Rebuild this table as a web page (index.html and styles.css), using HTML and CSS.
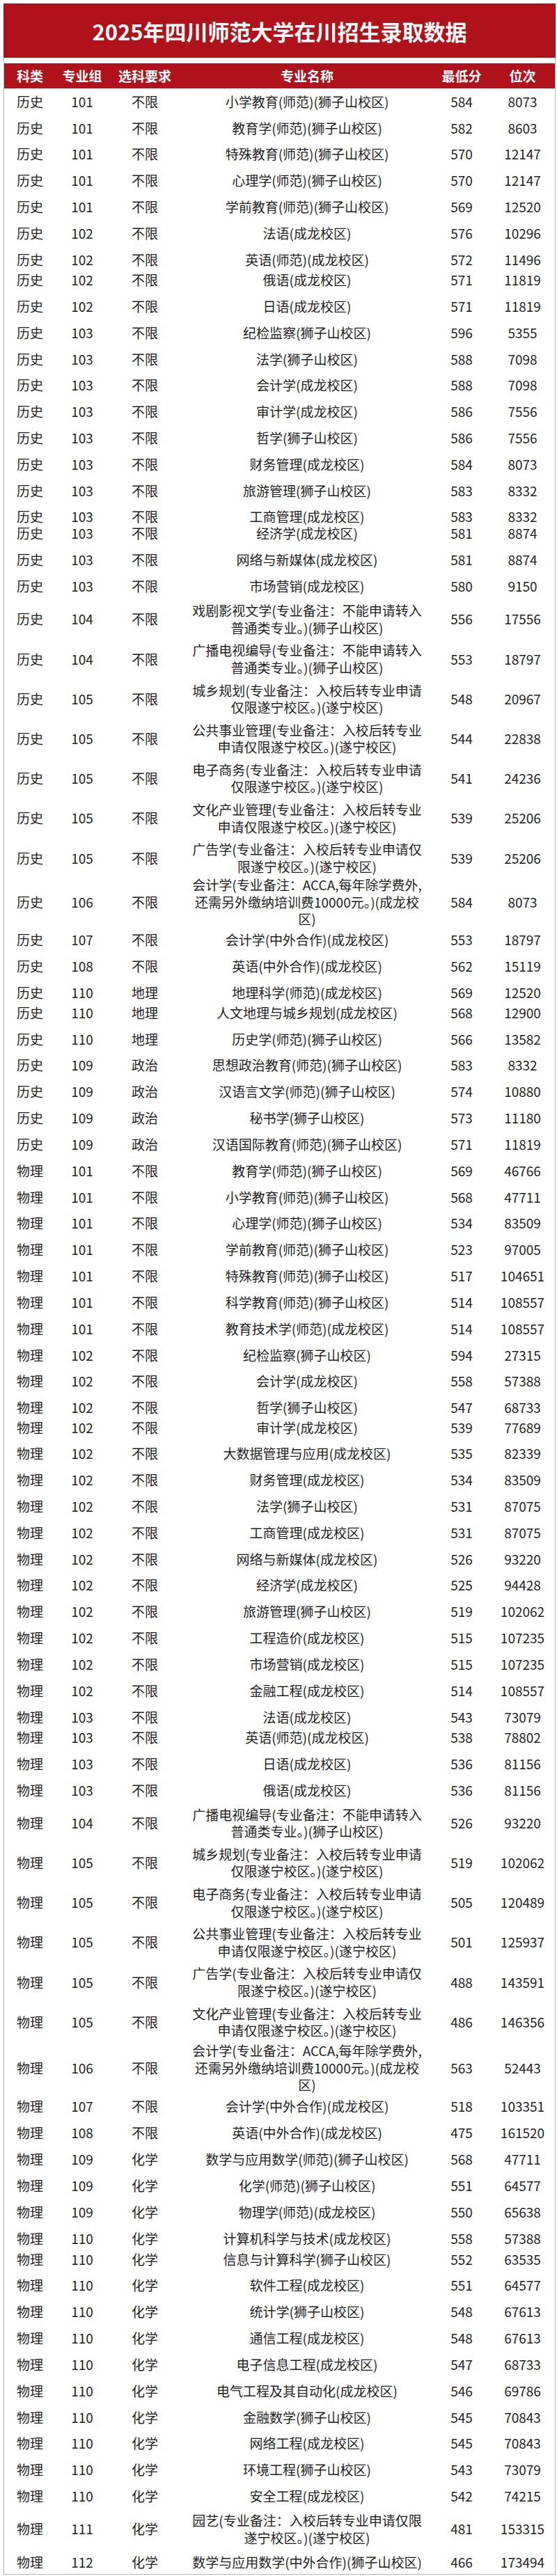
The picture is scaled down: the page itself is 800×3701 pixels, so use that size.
FILE: index.html
```html
<!DOCTYPE html>
<html lang="zh-CN">
<head>
<meta charset="utf-8">
<title>2025年四川师范大学在川招生录取数据</title>
<link rel="stylesheet" href="styles.css">
</head>
<body>
<div class="sheet">
  <div class="title">2025年四川师范大学在川招生录取数据</div>
  <div class="gap"></div>
  <div class="table">
    <div class="row head"><div>科类</div><div>专业组</div><div>选科要求</div><div>专业名称</div><div>最低分</div><div>位次</div></div>
    <div class="row"><div>历史</div><div>101</div><div>不限</div><div>小学教育(师范)(狮子山校区)</div><div>584</div><div>8073</div></div>
    <div class="row"><div>历史</div><div>101</div><div>不限</div><div>教育学(师范)(狮子山校区)</div><div>582</div><div>8603</div></div>
    <div class="row"><div>历史</div><div>101</div><div>不限</div><div>特殊教育(师范)(狮子山校区)</div><div>570</div><div>12147</div></div>
    <div class="row"><div>历史</div><div>101</div><div>不限</div><div>心理学(师范)(狮子山校区)</div><div>570</div><div>12147</div></div>
    <div class="row"><div>历史</div><div>101</div><div>不限</div><div>学前教育(师范)(狮子山校区)</div><div>569</div><div>12520</div></div>
    <div class="row"><div>历史</div><div>102</div><div>不限</div><div>法语(成龙校区)</div><div>576</div><div>10296</div></div>
    <div class="row r29"><div>历史</div><div>102</div><div>不限</div><div>英语(师范)(成龙校区)</div><div>572</div><div>11496</div></div>
    <div class="row"><div>历史</div><div>102</div><div>不限</div><div>俄语(成龙校区)</div><div>571</div><div>11819</div></div>
    <div class="row"><div>历史</div><div>102</div><div>不限</div><div>日语(成龙校区)</div><div>571</div><div>11819</div></div>
    <div class="row"><div>历史</div><div>103</div><div>不限</div><div>纪检监察(狮子山校区)</div><div>596</div><div>5355</div></div>
    <div class="row"><div>历史</div><div>103</div><div>不限</div><div>法学(狮子山校区)</div><div>588</div><div>7098</div></div>
    <div class="row"><div>历史</div><div>103</div><div>不限</div><div>会计学(成龙校区)</div><div>588</div><div>7098</div></div>
    <div class="row"><div>历史</div><div>103</div><div>不限</div><div>审计学(成龙校区)</div><div>586</div><div>7556</div></div>
    <div class="row"><div>历史</div><div>103</div><div>不限</div><div>哲学(狮子山校区)</div><div>586</div><div>7556</div></div>
    <div class="row"><div>历史</div><div>103</div><div>不限</div><div>财务管理(成龙校区)</div><div>584</div><div>8073</div></div>
    <div class="row"><div>历史</div><div>103</div><div>不限</div><div>旅游管理(狮子山校区)</div><div>583</div><div>8332</div></div>
    <div class="row r24"><div>历史</div><div>103</div><div>不限</div><div>工商管理(成龙校区)</div><div>583</div><div>8332</div></div>
    <div class="row"><div>历史</div><div>103</div><div>不限</div><div>经济学(成龙校区)</div><div>581</div><div>8874</div></div>
    <div class="row"><div>历史</div><div>103</div><div>不限</div><div>网络与新媒体(成龙校区)</div><div>581</div><div>8874</div></div>
    <div class="row r47"><div>历史</div><div>103</div><div>不限</div><div>市场营销(成龙校区)</div><div>580</div><div>9150</div></div>
    <div class="row r57"><div>历史</div><div>104</div><div>不限</div><div>戏剧影视文学(专业备注：不能申请转入<br>普通类专业。)(狮子山校区)</div><div>556</div><div>17556</div></div>
    <div class="row r57"><div>历史</div><div>104</div><div>不限</div><div>广播电视编导(专业备注：不能申请转入<br>普通类专业。)(狮子山校区)</div><div>553</div><div>18797</div></div>
    <div class="row r57"><div>历史</div><div>105</div><div>不限</div><div>城乡规划(专业备注：入校后转专业申请<br>仅限遂宁校区。)(遂宁校区)</div><div>548</div><div>20967</div></div>
    <div class="row r57"><div>历史</div><div>105</div><div>不限</div><div>公共事业管理(专业备注：入校后转专业<br>申请仅限遂宁校区。)(遂宁校区)</div><div>544</div><div>22838</div></div>
    <div class="row r57"><div>历史</div><div>105</div><div>不限</div><div>电子商务(专业备注：入校后转专业申请<br>仅限遂宁校区。)(遂宁校区)</div><div>541</div><div>24236</div></div>
    <div class="row r57"><div>历史</div><div>105</div><div>不限</div><div>文化产业管理(专业备注：入校后转专业<br>申请仅限遂宁校区。)(遂宁校区)</div><div>539</div><div>25206</div></div>
    <div class="row r63"><div>历史</div><div>105</div><div>不限</div><div>广告学(专业备注：入校后转专业申请仅<br>限遂宁校区。)(遂宁校区)</div><div>539</div><div>25206</div></div>
    <div class="row r54"><div>历史</div><div>106</div><div>不限</div><div>会计学(专业备注：ACCA,每年除学费外,<br>还需另外缴纳培训费10000元。)(成龙校<br>区)</div><div>584</div><div>8073</div></div>
    <div class="row"><div>历史</div><div>107</div><div>不限</div><div>会计学(中外合作)(成龙校区)</div><div>553</div><div>18797</div></div>
    <div class="row"><div>历史</div><div>108</div><div>不限</div><div>英语(中外合作)(成龙校区)</div><div>562</div><div>15119</div></div>
    <div class="row r29"><div>历史</div><div>110</div><div>地理</div><div>地理科学(师范)(成龙校区)</div><div>569</div><div>12520</div></div>
    <div class="row"><div>历史</div><div>110</div><div>地理</div><div>人文地理与城乡规划(成龙校区)</div><div>568</div><div>12900</div></div>
    <div class="row"><div>历史</div><div>110</div><div>地理</div><div>历史学(师范)(狮子山校区)</div><div>566</div><div>13582</div></div>
    <div class="row"><div>历史</div><div>109</div><div>政治</div><div>思想政治教育(师范)(狮子山校区)</div><div>583</div><div>8332</div></div>
    <div class="row"><div>历史</div><div>109</div><div>政治</div><div>汉语言文学(师范)(狮子山校区)</div><div>574</div><div>10880</div></div>
    <div class="row"><div>历史</div><div>109</div><div>政治</div><div>秘书学(狮子山校区)</div><div>573</div><div>11180</div></div>
    <div class="row"><div>历史</div><div>109</div><div>政治</div><div>汉语国际教育(师范)(狮子山校区)</div><div>571</div><div>11819</div></div>
    <div class="row"><div>物理</div><div>101</div><div>不限</div><div>教育学(师范)(狮子山校区)</div><div>569</div><div>46766</div></div>
    <div class="row"><div>物理</div><div>101</div><div>不限</div><div>小学教育(师范)(狮子山校区)</div><div>568</div><div>47711</div></div>
    <div class="row"><div>物理</div><div>101</div><div>不限</div><div>心理学(师范)(狮子山校区)</div><div>534</div><div>83509</div></div>
    <div class="row"><div>物理</div><div>101</div><div>不限</div><div>学前教育(师范)(狮子山校区)</div><div>523</div><div>97005</div></div>
    <div class="row"><div>物理</div><div>101</div><div>不限</div><div>特殊教育(师范)(狮子山校区)</div><div>517</div><div>104651</div></div>
    <div class="row"><div>物理</div><div>101</div><div>不限</div><div>科学教育(师范)(狮子山校区)</div><div>514</div><div>108557</div></div>
    <div class="row"><div>物理</div><div>101</div><div>不限</div><div>教育技术学(师范)(成龙校区)</div><div>514</div><div>108557</div></div>
    <div class="row"><div>物理</div><div>102</div><div>不限</div><div>纪检监察(狮子山校区)</div><div>594</div><div>27315</div></div>
    <div class="row"><div>物理</div><div>102</div><div>不限</div><div>会计学(成龙校区)</div><div>558</div><div>57388</div></div>
    <div class="row r28"><div>物理</div><div>102</div><div>不限</div><div>哲学(狮子山校区)</div><div>547</div><div>68733</div></div>
    <div class="row"><div>物理</div><div>102</div><div>不限</div><div>审计学(成龙校区)</div><div>539</div><div>77689</div></div>
    <div class="row"><div>物理</div><div>102</div><div>不限</div><div>大数据管理与应用(成龙校区)</div><div>535</div><div>82339</div></div>
    <div class="row"><div>物理</div><div>102</div><div>不限</div><div>财务管理(成龙校区)</div><div>534</div><div>83509</div></div>
    <div class="row"><div>物理</div><div>102</div><div>不限</div><div>法学(狮子山校区)</div><div>531</div><div>87075</div></div>
    <div class="row"><div>物理</div><div>102</div><div>不限</div><div>工商管理(成龙校区)</div><div>531</div><div>87075</div></div>
    <div class="row"><div>物理</div><div>102</div><div>不限</div><div>网络与新媒体(成龙校区)</div><div>526</div><div>93220</div></div>
    <div class="row"><div>物理</div><div>102</div><div>不限</div><div>经济学(成龙校区)</div><div>525</div><div>94428</div></div>
    <div class="row"><div>物理</div><div>102</div><div>不限</div><div>旅游管理(狮子山校区)</div><div>519</div><div>102062</div></div>
    <div class="row"><div>物理</div><div>102</div><div>不限</div><div>工程造价(成龙校区)</div><div>515</div><div>107235</div></div>
    <div class="row"><div>物理</div><div>102</div><div>不限</div><div>市场营销(成龙校区)</div><div>515</div><div>107235</div></div>
    <div class="row"><div>物理</div><div>102</div><div>不限</div><div>金融工程(成龙校区)</div><div>514</div><div>108557</div></div>
    <div class="row r29"><div>物理</div><div>103</div><div>不限</div><div>法语(成龙校区)</div><div>543</div><div>73079</div></div>
    <div class="row"><div>物理</div><div>103</div><div>不限</div><div>英语(师范)(成龙校区)</div><div>538</div><div>78802</div></div>
    <div class="row"><div>物理</div><div>103</div><div>不限</div><div>日语(成龙校区)</div><div>536</div><div>81156</div></div>
    <div class="row r47"><div>物理</div><div>103</div><div>不限</div><div>俄语(成龙校区)</div><div>536</div><div>81156</div></div>
    <div class="row r57"><div>物理</div><div>104</div><div>不限</div><div>广播电视编导(专业备注：不能申请转入<br>普通类专业。)(狮子山校区)</div><div>526</div><div>93220</div></div>
    <div class="row r57"><div>物理</div><div>105</div><div>不限</div><div>城乡规划(专业备注：入校后转专业申请<br>仅限遂宁校区。)(遂宁校区)</div><div>519</div><div>102062</div></div>
    <div class="row r57"><div>物理</div><div>105</div><div>不限</div><div>电子商务(专业备注：入校后转专业申请<br>仅限遂宁校区。)(遂宁校区)</div><div>505</div><div>120489</div></div>
    <div class="row r57"><div>物理</div><div>105</div><div>不限</div><div>公共事业管理(专业备注：入校后转专业<br>申请仅限遂宁校区。)(遂宁校区)</div><div>501</div><div>125937</div></div>
    <div class="row r57"><div>物理</div><div>105</div><div>不限</div><div>广告学(专业备注：入校后转专业申请仅<br>限遂宁校区。)(遂宁校区)</div><div>488</div><div>143591</div></div>
    <div class="row r66"><div>物理</div><div>105</div><div>不限</div><div>文化产业管理(专业备注：入校后转专业<br>申请仅限遂宁校区。)(遂宁校区)</div><div>486</div><div>146356</div></div>
    <div class="row r55"><div>物理</div><div>106</div><div>不限</div><div>会计学(专业备注：ACCA,每年除学费外,<br>还需另外缴纳培训费10000元。)(成龙校<br>区)</div><div>563</div><div>52443</div></div>
    <div class="row"><div>物理</div><div>107</div><div>不限</div><div>会计学(中外合作)(成龙校区)</div><div>518</div><div>103351</div></div>
    <div class="row"><div>物理</div><div>108</div><div>不限</div><div>英语(中外合作)(成龙校区)</div><div>475</div><div>161520</div></div>
    <div class="row"><div>物理</div><div>109</div><div>化学</div><div>数学与应用数学(师范)(狮子山校区)</div><div>568</div><div>47711</div></div>
    <div class="row"><div>物理</div><div>109</div><div>化学</div><div>化学(师范)(狮子山校区)</div><div>551</div><div>64577</div></div>
    <div class="row"><div>物理</div><div>109</div><div>化学</div><div>物理学(师范)(成龙校区)</div><div>550</div><div>65638</div></div>
    <div class="row r30"><div>物理</div><div>110</div><div>化学</div><div>计算机科学与技术(成龙校区)</div><div>558</div><div>57388</div></div>
    <div class="row"><div>物理</div><div>110</div><div>化学</div><div>信息与计算科学(狮子山校区)</div><div>552</div><div>63535</div></div>
    <div class="row"><div>物理</div><div>110</div><div>化学</div><div>软件工程(成龙校区)</div><div>551</div><div>64577</div></div>
    <div class="row"><div>物理</div><div>110</div><div>化学</div><div>统计学(狮子山校区)</div><div>548</div><div>67613</div></div>
    <div class="row"><div>物理</div><div>110</div><div>化学</div><div>通信工程(成龙校区)</div><div>548</div><div>67613</div></div>
    <div class="row"><div>物理</div><div>110</div><div>化学</div><div>电子信息工程(成龙校区)</div><div>547</div><div>68733</div></div>
    <div class="row"><div>物理</div><div>110</div><div>化学</div><div>电气工程及其自动化(成龙校区)</div><div>546</div><div>69786</div></div>
    <div class="row"><div>物理</div><div>110</div><div>化学</div><div>金融数学(狮子山校区)</div><div>545</div><div>70843</div></div>
    <div class="row"><div>物理</div><div>110</div><div>化学</div><div>网络工程(成龙校区)</div><div>545</div><div>70843</div></div>
    <div class="row"><div>物理</div><div>110</div><div>化学</div><div>环境工程(狮子山校区)</div><div>543</div><div>73079</div></div>
    <div class="row r47"><div>物理</div><div>110</div><div>化学</div><div>安全工程(成龙校区)</div><div>542</div><div>74215</div></div>
    <div class="row r47"><div>物理</div><div>111</div><div>化学</div><div>园艺(专业备注：入校后转专业申请仅限<br>遂宁校区。)(遂宁校区)</div><div>481</div><div>153315</div></div>
    <div class="row last"><div>物理</div><div>112</div><div>化学</div><div>数学与应用数学(中外合作)(狮子山校区)</div><div>466</div><div>173494</div></div>
  </div>
</div>
</body>
</html>
```

FILE: styles.css
```css
* { box-sizing: border-box; }
html, body {
  margin: 0;
  padding: 0;
  background: #ffffff;
}
body {
  font-family: "Noto Sans CJK SC", "Noto Sans", sans-serif;
  color: #1e1e1e;
}
.sheet {
  width: 800px;
  padding: 5px 2px 0 5px;
}
.title {
  height: 78px;
  background: #b0121b;
  color: #ffffff;
  font-size: 31px;
  font-weight: 700;
  display: flex;
  align-items: center;
  justify-content: center;
}
.gap {
  height: 8px;
  border-left: 1px solid #b4b4b4;
  border-right: 1px solid #b4b4b4;
}
.table {
  border-left: 1px solid #b4b4b4;
  border-right: 1px solid #b4b4b4;
  border-bottom: 1px solid #b4b4b4;
}
.row {
  display: grid;
  grid-template-columns: 74px 76px 104px 362px 82px 93px;
  height: 37.84px;
  align-items: start;
}
.row > div {
  height: 38px;
  display: flex;
  align-items: center;
  justify-content: center;
  text-align: center;
  font-size: 19px;
  line-height: 24.5px;
  white-space: nowrap;
}
.head {
  height: 36px;
  background: #b0121b;
  color: #ffffff;
}
.head > div {
  height: 36px;
  font-weight: 700;
}
.r24 { height: 24px; }
.r28 { height: 28.3px; }
.r29 { height: 29.3px; }
.r30 { height: 30px; }
.r47 { height: 47.3px; }
.r54 { height: 54px; }
.r55 { height: 55.6px; }
.r57 { height: 57.2px; }
.r63 { height: 63.3px; }
.r66 { height: 66px; }
.last { height: 36.4px; }
```
